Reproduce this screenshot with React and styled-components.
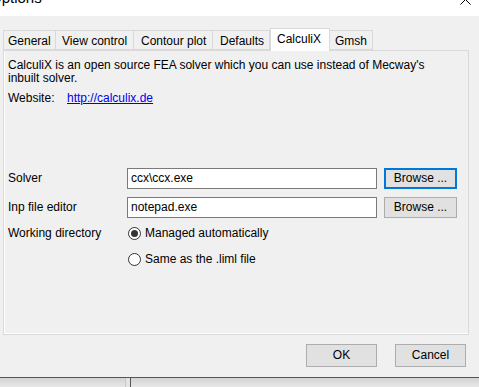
import React from 'react'
import styled, { createGlobalStyle } from 'styled-components'

const GlobalStyle = createGlobalStyle`
  html, body {
    margin: 0;
    padding: 0;
    background: #f0f0f0;
  }
  body {
    font-family: 'Liberation Sans', Arial, sans-serif;
    font-size: 12px;
    color: #000;
  }
`

const Window = styled.div`
  width: 479px;
  height: 387px;
  overflow: hidden;
  display: flex;
  flex-direction: column;
  background: #f0f0f0;
`

const TitleBar = styled.div`
  height: 16px;
  flex: none;
  background: #fff;
  display: flex;
  justify-content: space-between;
  overflow: hidden;
`

const Title = styled.span`
  font-family: 'Segoe UI', 'Liberation Sans', Arial, sans-serif;
  font-size: 15px;
  line-height: 15px;
  margin-top: -10px;
  margin-left: -10px;
  color: #000;
`

const CloseIcon = styled.svg`
  margin-top: -6px;
  margin-right: 8px;
`

const Tabs = styled.div`
  display: flex;
  align-items: flex-end;
  height: 22px;
  margin-top: 12px;
  padding-left: 3px;
  position: relative;
  z-index: 1;
`

const Tab = styled.div`
  box-sizing: border-box;
  width: ${p => p.$w}px;
  height: ${p => (p.$active ? '23px' : '20px')};
  margin-bottom: ${p => (p.$active ? '-1px' : '0')};
  padding-top: ${p => (p.$active ? '2px' : '2px')};
  padding-left: ${p => p.$pad}px;
  background: ${p => (p.$active ? '#fff' : '#f0f0f0')};
  border: 1px solid #d9d9d9;
  border-bottom: ${p => (p.$active ? 'none' : '1px solid #d9d9d9')};
  border-left: ${p => (p.$first || p.$active ? '1px solid #d9d9d9' : 'none')};
  white-space: nowrap;
  line-height: 16px;
  color: #000;
`

const Panel = styled.div`
  box-sizing: border-box;
  width: 466px;
  height: 285px;
  margin-left: 3px;
  flex: none;
  border: 1px solid #d9d9d9;
  box-shadow: inset 1px -1px 0 #fff;
  padding: 8px 4px 0 4px;
`

const Description = styled.p`
  margin: 0;
  line-height: 13px;
  width: 430px;
`

const WebsiteRow = styled.div`
  display: flex;
  margin-top: 6px;
  line-height: 14px;
`

const WebsiteLabel = styled.span`
  width: 59px;
`

const Link = styled.a`
  color: #0000ee;
  text-decoration: underline;
`

const Form = styled.div`
  display: grid;
  grid-template-columns: 119px 257px 73px;
  row-gap: 8px;
  margin-top: 63px;
  align-items: center;
`

const Label = styled.span`
  line-height: 21px;
  align-self: ${p => (p.$top ? 'start' : 'center')};
  ${p => p.$top && 'line-height: 16px; margin-top: -1px;'}
`

const TextField = styled.div`
  box-sizing: border-box;
  width: 250px;
  height: 21px;
  border: 1px solid #7a7a7a;
  background: #fff;
  padding: 0 3px;
  line-height: 19px;
`

const BrowseButton = styled.div`
  box-sizing: border-box;
  height: 21px;
  background: #e1e1e1;
  border: ${p => (p.$focused ? '2px solid #0078d7' : '1px solid #adadad')};
  text-align: center;
  line-height: ${p => (p.$focused ? '17px' : '19px')};
`

const RadioGroup = styled.div`
  display: flex;
  flex-direction: column;
  gap: 10px;
  margin-top: -1px;
  grid-column: 2 / 4;
`

const RadioRow = styled.label`
  display: flex;
  align-items: center;
  gap: 4px;
  height: 16px;
`

const RadioCircle = styled.span`
  box-sizing: border-box;
  width: 13px;
  height: 13px;
  border-radius: 50%;
  border: 1px solid #333;
  background: #fff;
  display: flex;
  align-items: center;
  justify-content: center;
  margin-left: 1px;
  &::after {
    content: '';
    width: 7px;
    height: 7px;
    border-radius: 50%;
    background: #333;
    display: ${p => (p.$checked ? 'block' : 'none')};
  }
`

const Footer = styled.div`
  box-sizing: border-box;
  height: 43px;
  flex: none;
  display: flex;
  justify-content: flex-end;
  gap: 18px;
  padding: 9px 13px 0 0;
  border-bottom: 1px solid #555;
`

const DialogButton = styled.div`
  box-sizing: border-box;
  width: 71px;
  height: 23px;
  background: #e1e1e1;
  border: 1px solid #adadad;
  text-align: center;
  line-height: 21px;
`

const Behind = styled.div`
  flex: 1;
  display: flex;
  background: linear-gradient(#d2d2d2, #e8e8e8);
`

const BehindLeft = styled.div`
  width: 125px;
  border-right: 1px solid #c8c8c8;
`

const BehindDivider = styled.div`
  width: 4px;
  background: #e4e4e4;
  border-right: 1px solid #555;
`

const tabs = [
  { label: 'General', w: 53, pad: 4 },
  { label: 'View control', w: 78, pad: 6 },
  { label: 'Contour plot', w: 79, pad: 7 },
  { label: 'Defaults', w: 57, pad: 7 },
  { label: 'CalculiX', w: 60, pad: 6, active: true },
  { label: 'Gmsh', w: 43, pad: 5 }
]

export default function App() {
  return (
    <>
      <GlobalStyle />
      <Window>
        <TitleBar>
          <Title>Options</Title>
          <CloseIcon width="11" height="11" viewBox="0 0 11 11">
            <path d="M0.5 0.5 L10.5 10.5 M10.5 0.5 L0.5 10.5" stroke="#000" strokeWidth="1" />
          </CloseIcon>
        </TitleBar>
        <Tabs>
          {tabs.map((t, i) => (
            <Tab key={t.label} $w={t.w} $pad={t.pad} $first={i === 0} $active={t.active}>
              {t.label}
            </Tab>
          ))}
        </Tabs>
        <Panel>
          <Description>
            CalculiX is an open source FEA solver which you can use instead of Mecway's inbuilt solver.
          </Description>
          <WebsiteRow>
            <WebsiteLabel>Website:</WebsiteLabel>
            <Link href="#">http://calculix.de</Link>
          </WebsiteRow>
          <Form>
            <Label>Solver</Label>
            <TextField>ccx\ccx.exe</TextField>
            <BrowseButton $focused>Browse ...</BrowseButton>
            <Label>Inp file editor</Label>
            <TextField>notepad.exe</TextField>
            <BrowseButton>Browse ...</BrowseButton>
            <Label $top>Working directory</Label>
            <RadioGroup>
              <RadioRow>
                <RadioCircle $checked />
                Managed automatically
              </RadioRow>
              <RadioRow>
                <RadioCircle />
                Same as the .liml file
              </RadioRow>
            </RadioGroup>
          </Form>
        </Panel>
        <Footer>
          <DialogButton>OK</DialogButton>
          <DialogButton>Cancel</DialogButton>
        </Footer>
        <Behind>
          <BehindLeft />
          <BehindDivider />
        </Behind>
      </Window>
    </>
  )
}
